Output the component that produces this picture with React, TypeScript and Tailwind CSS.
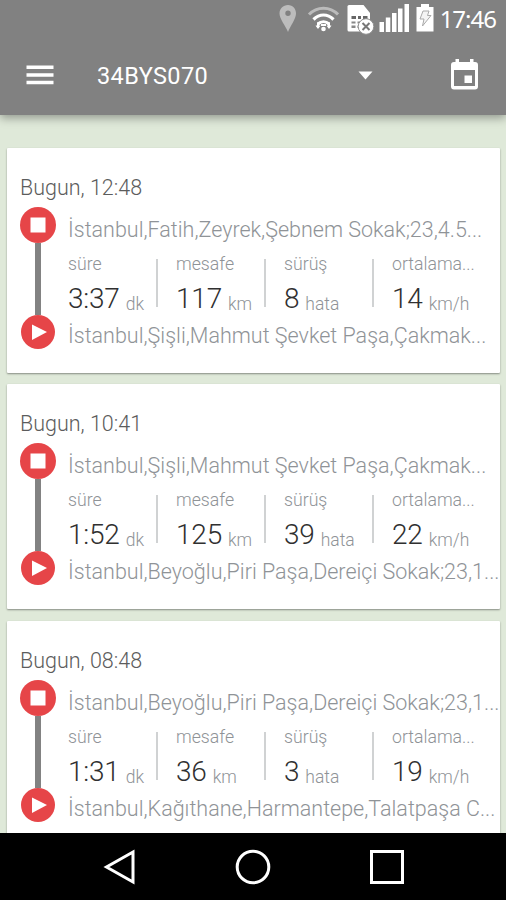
interface Stat {
    label: string;
    value: string;
    unit: string;
}

interface Trip {
    time: string;
    to: string;
    from: string;
    stats: Stat[];
}

const makeStats = (duration: string, distance: string, faults: string, average: string): Stat[] => [
    { label: "süre", value: duration, unit: "dk" },
    { label: "mesafe", value: distance, unit: "km" },
    { label: "sürüş", value: faults, unit: "hata" },
    { label: "ortalama...", value: average, unit: "km/h" },
];

const trips: Trip[] = [
    {
        time: "Bugun, 12:48",
        to: "İstanbul,Fatih,Zeyrek,Şebnem Sokak;23,4.5...",
        from: "İstanbul,Şişli,Mahmut Şevket Paşa,Çakmak...",
        stats: makeStats("3:37", "117", "8", "14"),
    },
    {
        time: "Bugun, 10:41",
        to: "İstanbul,Şişli,Mahmut Şevket Paşa,Çakmak...",
        from: "İstanbul,Beyoğlu,Piri Paşa,Dereiçi Sokak;23,1...",
        stats: makeStats("1:52", "125", "39", "22"),
    },
    {
        time: "Bugun, 08:48",
        to: "İstanbul,Beyoğlu,Piri Paşa,Dereiçi Sokak;23,1...",
        from: "İstanbul,Kağıthane,Harmantepe,Talatpaşa C...",
        stats: makeStats("1:31", "36", "3", "19"),
    },
];

function StatusBar() {
    return (
        <div className="flex h-[38px] items-start justify-end pr-[10px] text-white">
            <svg className="mt-[5px] mr-[11px] h-[28px] w-[18px]" viewBox="0 0 18 28">
                <path fillRule="evenodd" d="M10 0C5 0 1.500 3.700 1.500 8.500c0 5.500 6 12 8.500 18.500 2.500-6.500 8-13 8-18.500C18 3.700 15 0 10 0Zm0 5.500a2.700 2.700 0 1 1 0 5.400A2.700 2.700 0 0 1 10 5.500Z" fill="#bcbcbc" />
            </svg>
            <svg className="mt-[5px] mr-[7px] h-[28px] w-[32px]" viewBox="0 0 32 28" fill="none">
                <path d="M2 9.500C10 1 23 1 31 9.500" stroke="#bbb" strokeWidth="3" />
                <path d="M6.500 14.500C12.500 8.500 20.500 8.500 26.500 14.500" stroke="white" strokeWidth="3.200" />
                <path d="M11 19c3.200-3 7.800-3 11 0" stroke="white" strokeWidth="3.200" />
                <path d="M11 17.500v5M22 17.500v5M14 20h5" stroke="white" strokeWidth="2" />
                <path d="m9 20.500 2 2.500 2-2.500M20 20.500l2 2.500 2-2.500" stroke="white" strokeWidth="1.200" />
                <circle cx="16.500" cy="24" r="2.300" fill="white" />
            </svg>
            <svg className="mt-[4px] mr-[5px] h-[31px] w-[28px]" viewBox="0 0 28 31">
                <path d="M3 1h14.500l6.500 8v17q0 1.500-1.500 1.500H3Q1.500 27.500 1.500 26V2.500Q1.500 1 3 1Z" fill="white" />
                <path d="M5.500 12h4.500v3H5.500zm6.500 0h3v3h-3zm5 0h4.500v3H17z" fill="#666" />
                <path d="M5.500 17.500h4v2h-4zm6 0h3v2h-3zm-6 4h4v2.500h-4zm6 0h2v2.500h-2z" fill="#888" />
                <circle cx="20" cy="22.500" r="7.800" fill="white" stroke="#909090" strokeWidth="1" />
                <path d="m16.500 19 7 7m0-7-7 7" stroke="#777" strokeWidth="2" />
            </svg>
            <svg className="mt-[4px] mr-[6px] h-[28px] w-[31px]" viewBox="0 0 31 28" fill="white">
                <path d="M.5 18H5v10H.5zM6.800 13.500h4.500V28H6.800zM13 9h4.500v19H13zM19 4.500h4.500V28H19zM25.500 0H30v28h-4.500z" />
            </svg>
            <svg className="mt-[4px] mr-[6px] h-[28px] w-[18px]" viewBox="0 0 18 28">
                <path d="M5 0h8v3h4.500v24.500H.5V3H5Z" fill="white" />
                <path d="M7 7h6l-1.500 4.500H15L6.500 22 8 15H4Z" fill="#f4f4f4" stroke="#aaa" strokeWidth="1" />
            </svg>
            <span className="mt-[3px] font-['Noto_Sans','Open_Sans',sans-serif] text-[24px] leading-[32px] tracking-[-1px]">17:46</span>
        </div>
    );
}

function Header() {
    return (
        <header className="z-10 h-[114.500px] shrink-0 bg-[#818181] text-white shadow-[0_3px_9px_rgba(0,0,0,0.35)]">
            <StatusBar />
            <div className="flex h-[74px] items-center">
                <svg className="ml-[26px] h-[20px] w-[28px]" viewBox="0 0 28 20" fill="white">
                    <path d="M.5 .5h27v3.500H.5zm0 7.700h27v3.500H.5zm0 7.500h27v3.500H.5z" />
                </svg>
                <span className="ml-[43px] mt-[2px] w-[261px] text-[23.500px] leading-[30px] tracking-[0.4px]">34BYS070</span>
                <svg className="h-[9px] w-[15px]" viewBox="0 0 15 9">
                    <path d="M.5.5h14l-7 8Z" fill="white" />
                </svg>
                <svg className="mb-[2px] ml-[77px] h-[31px] w-[29px]" viewBox="0 0 29 31">
                    <path fillRule="evenodd" d="M5.500 0H9v3h11V0h3.500v3H25q3 0 3 3v21.500q0 3-3 3H4q-3 0-3-3V6q0-3 3-3h1.500ZM4 11v16h21V11Zm10.500 5.500h7.500v7.500h-7.500Z" fill="white" />
                </svg>
            </div>
        </header>
    );
}

// stop marker on top, start marker below, joined by the track line
function Route() {
    return (
        <div className="flex w-[36px] shrink-0 flex-col items-center">
            <svg className="h-[36px] w-[36px]" viewBox="0 0 36 36">
                <circle cx="18" cy="18" r="18" fill="#e64548" />
                <path d="M10.500 10.500h15v15h-15z" fill="white" />
            </svg>
            <div className="mr-[1px] h-[72px] w-[6px] bg-[#828282]" />
            <svg className="mr-[1px] h-[34px] w-[34px]" viewBox="0 0 34 34">
                <circle cx="17" cy="17" r="17" fill="#e64548" />
                <path d="M11 9.500v15.500L26 17Z" fill="white" />
            </svg>
        </div>
    );
}

function TripCard({ trip }: { trip: Trip }) {
    return (
        <section className="h-[225px] shrink-0 overflow-hidden rounded-[1px] bg-white pl-[13px] pt-[25px] shadow-[0_1px_2px_rgba(0,0,0,0.4)]">
            <h2 className="h-[34px] text-[21.500px] font-light leading-[30px] text-[#5c5c5c]">{trip.time}</h2>
            <div className="flex">
                <Route />
                <div className="ml-[12px] text-[#8f9397]">
                    <p className="mt-[7px] whitespace-nowrap text-[21.500px] font-light leading-[32px]">{trip.to}</p>
                    <div className="mt-[6px] flex h-[66px]">
                        {trip.stats.map((stat, i) => (
                            <div key={stat.label} className="relative w-[108px] shrink-0">
                                {i > 0 && <div className="absolute left-[-20px] top-[7px] h-[48px] w-[2px] bg-[#d0d2d3]" />}
                                <div className="h-[29px] text-[17.700px] font-light leading-[24px]">{stat.label}</div>
                                <div className="flex items-baseline whitespace-nowrap leading-[36px]">
                                    <span className="text-[28px] font-light tracking-[-0.2px] text-[#303030]">{stat.value}</span>
                                    <span className="relative top-[2px] ml-[6px] text-[17.500px] font-light">{stat.unit}</span>
                                </div>
                            </div>
                        ))}
                    </div>
                    <p className="mt-[2px] whitespace-nowrap text-[21.500px] font-light leading-[32px]">{trip.from}</p>
                </div>
            </div>
        </section>
    );
}

export default function App() {
    return (
        <div className="flex h-[900px] w-[506px] flex-col overflow-hidden bg-[#dfe9d9] font-['Roboto',sans-serif]">
            <Header />
            <main className="flex min-h-0 flex-1 flex-col gap-[11.300px] overflow-hidden pl-[7px] pr-[6px] pt-[33.500px]">
                {trips.map((trip) => (
                    <TripCard key={trip.time} trip={trip} />
                ))}
            </main>
            <nav className="flex h-[67px] shrink-0 items-start bg-black pl-[103px] pt-[16px]">
                <svg className="h-[36px] w-[33px]" viewBox="0 0 33 36" fill="none">
                    <path d="M30 3v30L3.500 18Z" stroke="white" strokeWidth="3" />
                </svg>
                <svg className="ml-[99px] h-[36px] w-[36px]" viewBox="0 0 36 36" fill="none">
                    <circle cx="18" cy="18" r="15.800" stroke="white" strokeWidth="3" />
                </svg>
                <svg className="ml-[98px] h-[36px] w-[36px]" viewBox="0 0 36 36" fill="none">
                    <path d="M2.500 2.500h31v31h-31Z" stroke="white" strokeWidth="3" />
                </svg>
            </nav>
        </div>
    );
}
